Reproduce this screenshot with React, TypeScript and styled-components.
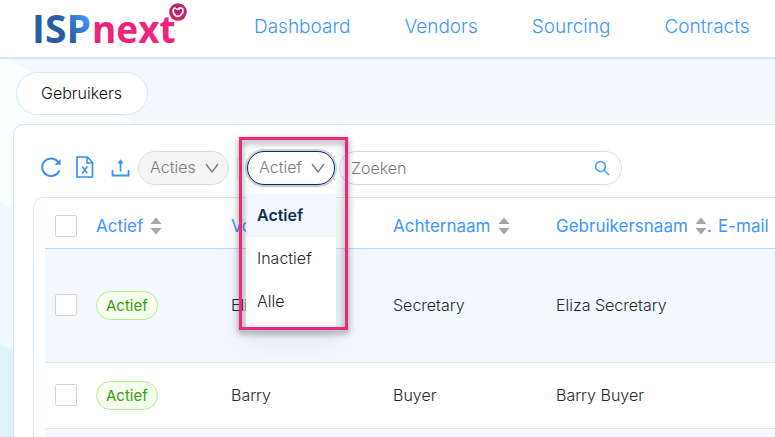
import React, { useState } from "react";
import styled, { createGlobalStyle, css } from "styled-components";

const GlobalStyle = createGlobalStyle`
  *, *::before, *::after { box-sizing: border-box; }
  html, body, #root { height: 100%; }
  body {
    margin: 0;
    background: #f3f8ff;
    color: #262626;
    font-family: Inter, "Liberation Sans", sans-serif;
    font-size: 16px;
    font-weight: 300;
  }
  button, input, select { font: inherit; color: inherit; }
`;

const Page = styled.div`
  position: relative;
  isolation: isolate;
  display: flex;
  flex-direction: column;
  height: 100%;
  overflow: hidden;
`;

const Backdrop = styled.svg`
  position: absolute;
  inset: 0;
  z-index: -1;
`;

const Header = styled.header`
  display: flex;
  flex: none;
  align-items: center;
  height: 59px;
  padding-left: 32px;
  background: #fff;
  border-bottom: 2px solid #d0e8f8;
`;

const LogoLink = styled.a`
  display: block;
  flex: none;
  height: 57px;
`;

const Nav = styled.nav`
  display: flex;
  gap: 54px;
  margin-left: 62px;
  padding-bottom: 4px;
`;

const NavLink = styled.a`
  color: #4096ff;
  font-size: 19px;
  line-height: 24px;
  text-decoration: none;
`;

const TabBar = styled.div`
  display: flex;
  flex: none;
  padding: 13px 16px 9px;
`;

const Tab = styled.button`
  height: 43px;
  padding: 0 25px 2px 24px;
  color: #111;
  background: #fff;
  border: 1px solid #cfe6fa;
  border-radius: 22px;
`;

const Panel = styled.main`
  flex: 1;
  min-height: 0;
  display: flex;
  flex-direction: column;
  margin-left: 13px;
  padding: 26px 0 0 19px;
  background: #fff;
  border: 1px solid #cfe6f8;
  border-width: 1px 0 0 1px;
  border-top-left-radius: 10px;
`;

const Toolbar = styled.div`
  display: flex;
  flex: none;
  align-items: center;
  height: 34px;
  padding-left: 7px;
`;

const IconButton = styled.button<{ $width: number }>`
  display: flex;
  align-items: center;
  flex: none;
  width: ${(p) => p.$width}px;
  height: 34px;
  padding: 0 0 2px;
  color: #3b8ff5;
  background: none;
  border: 0;
`;

const PillWrap = styled.div<{ $width: number }>`
  position: relative;
  flex: none;
  width: ${(p) => p.$width}px;
  height: 34px;

  > svg {
    position: absolute;
    top: 11px;
    right: 10px;
    pointer-events: none;
  }
`;

const PillSelect = styled.select<{ $open?: boolean }>`
  appearance: none;
  width: 100%;
  height: 34px;
  padding: 0 11px 2px;
  color: #7b7b7b;
  background: #f5f5f5;
  border: 1px solid #d9d9d9;
  border-radius: 17px;
  outline: none;

  ${(p) =>
    p.$open &&
    css`
      background: #fff;
      border-color: #0d2f57;
      box-shadow: 0 0 0 2px rgba(20, 50, 90, 0.22);
    `}
`;

const Divider = styled.span`
  flex: none;
  width: 1px;
  height: 20px;
  margin: 0 9px 0 8px;
  background: #e3e3e3;
`;

const Menu = styled.ul`
  position: absolute;
  z-index: 2;
  top: 37px;
  left: -1px;
  width: 90px;
  margin: 0;
  padding: 6px 0 4px;
  list-style: none;
  background: #fff;
  border-radius: 6px 6px 2px 2px;
  box-shadow: 0 9px 28px 8px rgba(0, 0, 0, 0.05), 0 6px 16px 0 rgba(0, 0, 0, 0.06);
`;

const MenuItem = styled.button<{ $selected: boolean }>`
  display: block;
  width: 100%;
  height: 43px;
  padding: 0 11px 2px;
  text-align: left;
  border: 0;
  background: ${(p) => (p.$selected ? "#f3f8ff" : "transparent")};
  color: ${(p) => (p.$selected ? "#0d2f57" : "#262626")};
  font-weight: ${(p) => (p.$selected ? 600 : 300)};
`;

const Highlight = styled.div`
  position: absolute;
  z-index: 3;
  top: -14px;
  left: -8px;
  width: 109px;
  height: 193px;
  border: 3px solid #ec287c;
  filter: drop-shadow(0 3px 3px rgba(0, 0, 0, 0.5));
  pointer-events: none;
`;

const SearchBox = styled.div`
  display: flex;
  align-items: center;
  width: 283px;
  height: 34px;
  margin-left: 4px;
  padding: 0 6px 0 11px;
  background: #fff;
  border: 1px solid #d9d9d9;
  border-radius: 17px;
`;

const SearchInput = styled.input`
  flex: 1;
  min-width: 0;
  padding: 0;
  border: 0;
  outline: none;
  background: none;

  &::placeholder { color: #7b7b7b; opacity: 1; }
`;

const SearchButton = styled.button`
  display: flex;
  justify-content: center;
  width: 26px;
  padding: 0;
  color: #4096ff;
  background: none;
  border: 0;
`;

const Card = styled.section`
  flex: 1;
  min-height: 0;
  margin-top: 12px;
  padding-left: 11px;
  border: 1px solid #d3e7f7;
  border-width: 1px 0 0 1px;
  border-top-left-radius: 10px;
  overflow: hidden;
`;

const Table = styled.table`
  width: 100%;
  table-layout: fixed;
  border-collapse: separate;
  border-spacing: 0;
`;

const Column = styled.col<{ $width?: number }>`
  width: ${(p) => (p.$width ? `${p.$width}px` : "auto")};
`;

const HeadCell = styled.th`
  height: 51px;
  padding: 6px 10px 0;
  color: #4096ff;
  font-size: 17px;
  font-weight: 400;
  line-height: 20px;
  text-align: left;
  white-space: nowrap;
  border-bottom: 1px solid #b9dcfb;
`;

const HeadLabel = styled.span`
  display: flex;
  align-items: center;
  gap: 7px;

  > svg { flex: none; }
`;

const Trailing = styled.span`
  margin-left: -7px;
`;

const Row = styled.tr<{ $height: number; $tinted?: boolean }>`
  height: ${(p) => p.$height}px;
  background: ${(p) => (p.$tinted ? "#f3f8ff" : "#fff")};
`;

const Cell = styled.td`
  padding: 0 10px 1px;
  white-space: nowrap;
  border-bottom: 1px solid #e2e5e9;
`;

const CheckBox = styled.input`
  appearance: none;
  display: block;
  width: 22px;
  height: 22px;
  margin: 0;
  background: #fff;
  border: 1px solid #d3d3d3;
  border-radius: 2px;

  &:checked { background: #4096ff; }
`;

const Tag = styled.span`
  display: block;
  width: max-content;
  padding: 0 9px;
  color: #389e0d;
  font-size: 15px;
  font-weight: 400;
  line-height: 27px;
  background: #f6ffed;
  border: 1px solid #b7eb8f;
  border-radius: 15px;
`;

const Logo = () => (
  <svg width="160" height="57" viewBox="0 0 160 57" role="img" aria-label="ISPnext">
    <defs>
      <linearGradient id="isp" gradientUnits="userSpaceOnUse" x1="30" y1="42" x2="58" y2="20">
        <stop offset="0.25" stopColor="#285da2" />
        <stop offset="1" stopColor="#4096ff" />
      </linearGradient>
      <linearGradient id="badge" x1="0" y1="0" x2="1" y2="1">
        <stop offset="0" stopColor="#b5256c" />
        <stop offset="1" stopColor="#d81b63" />
      </linearGradient>
    </defs>
    <g fontFamily="'Open Sans', sans-serif" fontWeight="700">
      <text x="0" y="43" fontSize="39" fill="url(#isp)">ISP</text>
      <text x="60" y="43" fontSize="37" fill="#ee237c">next</text>
    </g>
    <circle cx="146" cy="12" r="8.8" fill="url(#badge)" />
    <path
      d="M143.600 8.200C141 8 140.600 10.500 141.500 12.600C142.500 15 144.300 16.500 146.200 16.300C148.800 16 151 13 151 10.400C150.900 7.900 148.300 7.300 146.300 8.800L147.800 9.600"
      fill="none"
      stroke="#fff"
      strokeWidth="1.700"
      strokeLinejoin="round"
    />
    <path d="M143.600 8.400L145.600 9.800" stroke="#fff" strokeWidth="1.400" />
  </svg>
);

const ReloadIcon = () => (
  <svg width="22" height="22" viewBox="0 0 22 22" fill="none" stroke="currentColor">
    <path d="M19.300 14.300A8.800 8.800 0 1 1 18.300 6.200" strokeWidth="2" />
    <path d="M20.600 3v5.800h-6z" fill="currentColor" stroke="none" />
  </svg>
);

const ExcelIcon = () => (
  <svg width="18" height="22" viewBox="0 0 18 22" fill="none" stroke="currentColor">
    <path d="M1 1h10.500L16.500 6.500V21H1z" strokeWidth="1.700" />
    <path d="M11 1v6h5.500" strokeWidth="1.500" />
    <path d="M6.300 10.500l5 7M11.300 10.500l-5 7" strokeWidth="1.500" />
  </svg>
);

const UploadIcon = () => (
  <svg width="20" height="22" viewBox="0 0 20 22" fill="none" stroke="currentColor">
    <path d="M1.500 14v5.500h16v-5.500" strokeWidth="1.800" />
    <path d="M9.500 15.500V5" strokeWidth="1.700" />
    <path d="M6.300 7.500L9.500 3.200l3.200 4.300z" fill="currentColor" stroke="none" />
  </svg>
);

const ChevronIcon = () => (
  <svg width="14" height="12" viewBox="0 0 14 12" fill="none" stroke="#808080" strokeWidth="1.400">
    <path d="M1 2l6 8 6-8" />
  </svg>
);

const SearchIcon = () => (
  <svg width="16" height="16" viewBox="0 0 16 16" fill="none" stroke="currentColor" strokeWidth="1.500">
    <circle cx="6.500" cy="6.500" r="4.900" />
    <path d="M10 10l5 5" />
  </svg>
);

const SorterIcon = () => (
  <svg width="12" height="18" viewBox="0 0 12 18" fill="#a6a6a6">
    <path d="M6 .5L11.500 7H.5zM6 17.500L11.500 11H.5z" />
  </svg>
);

const users = [
  { first: "Eliza", last: "Secretary", height: 114 },
  { first: "Barry", last: "Buyer", height: 66 },
];

const statuses = ["Actief", "Inactief", "Alle"];

export default function App() {
  const [status, setStatus] = useState("Actief");

  return (
    <>
      <GlobalStyle />
      <Page>
        <Backdrop width="100%" height="100%" aria-hidden="true">
          <path d="M0 56L170 140V437H0z" fill="#f7ffff" />
          <path d="M0 202L40 220V437H0z" fill="#eefafe" />
          <path d="M0 344L40 359V900H0z" fill="#e1f3fa" />
        </Backdrop>
        <Header>
          <LogoLink href="#home">
            <Logo />
          </LogoLink>
          <Nav>
            {["Dashboard", "Vendors", "Sourcing", "Contracts"].map((item) => (
              <NavLink key={item} href={`#${item.toLowerCase()}`}>{item}</NavLink>
            ))}
          </Nav>
        </Header>
        <TabBar>
          <Tab type="button">Gebruikers</Tab>
        </TabBar>
        <Panel>
          <Toolbar>
            <IconButton $width={36} type="button" aria-label="Vernieuwen"><ReloadIcon /></IconButton>
            <IconButton $width={35} type="button" aria-label="Exporteren"><ExcelIcon /></IconButton>
            <IconButton $width={27} type="button" aria-label="Uploaden"><UploadIcon /></IconButton>
            <PillWrap $width={91}>
              <PillSelect aria-label="Acties" defaultValue="Acties">
                <option>Acties</option>
              </PillSelect>
              <ChevronIcon />
            </PillWrap>
            <Divider />
            <PillWrap $width={88}>
              <PillSelect
                $open
                aria-label="Status"
                value={status}
                onChange={(e) => setStatus(e.target.value)}
              >
                {statuses.map((s) => <option key={s}>{s}</option>)}
              </PillSelect>
              <ChevronIcon />
              <Menu>
                {statuses.map((s) => (
                  <li key={s}>
                    <MenuItem type="button" $selected={s === status} onClick={() => setStatus(s)}>
                      {s}
                    </MenuItem>
                  </li>
                ))}
              </Menu>
              <Highlight />
            </PillWrap>
            <SearchBox>
              <SearchInput type="text" placeholder="Zoeken" aria-label="Zoeken" />
              <SearchButton type="button" aria-label="Zoek"><SearchIcon /></SearchButton>
            </SearchBox>
          </Toolbar>
          <Card>
            <Table>
              <colgroup>
                <Column $width={41} />
                <Column $width={135} />
                <Column $width={162} />
                <Column $width={163} />
                <Column $width={162} />
                <Column />
              </colgroup>
              <thead>
                <tr>
                  <HeadCell><CheckBox type="checkbox" aria-label="Alles selecteren" /></HeadCell>
                  <HeadCell><HeadLabel>Actief<SorterIcon /></HeadLabel></HeadCell>
                  <HeadCell><HeadLabel>Voornaam<SorterIcon /></HeadLabel></HeadCell>
                  <HeadCell><HeadLabel>Achternaam<SorterIcon /></HeadLabel></HeadCell>
                  <HeadCell><HeadLabel>Gebruikersnaam<SorterIcon /><Trailing>.</Trailing></HeadLabel></HeadCell>
                  <HeadCell>E-mail</HeadCell>
                </tr>
              </thead>
              <tbody>
                {users.map((u, i) => (
                  <Row key={u.first} $height={u.height} $tinted={i % 2 === 0}>
                    <Cell><CheckBox type="checkbox" aria-label={`${u.first} ${u.last}`} /></Cell>
                    <Cell><Tag>Actief</Tag></Cell>
                    <Cell>{u.first}</Cell>
                    <Cell>{u.last}</Cell>
                    <Cell>{u.first} {u.last}</Cell>
                    <Cell />
                  </Row>
                ))}
                <Row $height={66} $tinted>
                  <Cell colSpan={6} />
                </Row>
              </tbody>
            </Table>
          </Card>
        </Panel>
      </Page>
    </>
  );
}
